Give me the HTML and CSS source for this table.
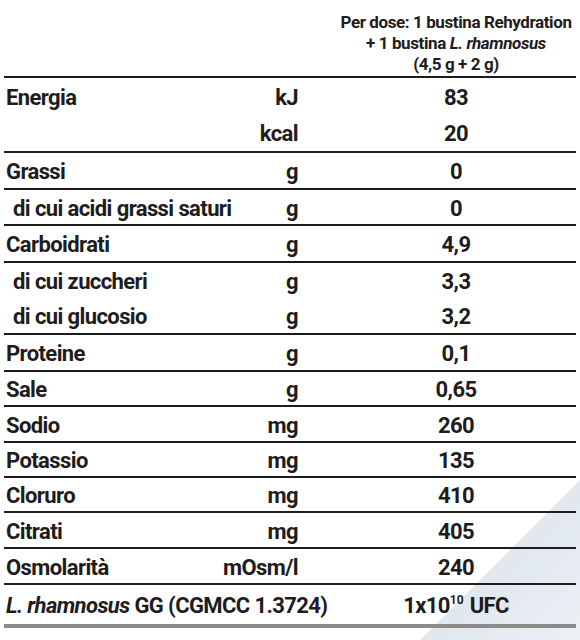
FILE: index.html
```html
<!DOCTYPE html>
<html lang="it">
<head>
<meta charset="utf-8">
<title>Valori nutrizionali</title>
<link rel="stylesheet" href="styles.css">
</head>
<body>
<div class="sheet">
  <div class="head">
    <div class="head-text">
      <span class="hl">Per dose: 1 bustina Rehydration</span>
      <span class="hl">+ 1 bustina <i>L. rhamnosus</i></span>
      <span class="hl">(4,5 g + 2 g)</span>
    </div>
  </div>

  <div class="row pair">
    <div class="label">Energia</div><div class="unit">kJ</div><div class="val">83</div>
    <div class="label"></div><div class="unit">kcal</div><div class="val">20</div>
  </div>
  <div class="row tall">
    <div class="label">Grassi</div><div class="unit">g</div><div class="val">0</div>
  </div>
  <div class="row">
    <div class="label sub">di cui acidi grassi saturi</div><div class="unit">g</div><div class="val">0</div>
  </div>
  <div class="row tall">
    <div class="label">Carboidrati</div><div class="unit">g</div><div class="val">4,9</div>
  </div>
  <div class="row double">
    <div class="label sub">di cui zuccheri</div><div class="unit">g</div><div class="val">3,3</div>
    <div class="label sub">di cui glucosio</div><div class="unit">g</div><div class="val">3,2</div>
  </div>
  <div class="row tall">
    <div class="label">Proteine</div><div class="unit">g</div><div class="val">0,1</div>
  </div>
  <div class="row short">
    <div class="label">Sale</div><div class="unit">g</div><div class="val">0,65</div>
  </div>
  <div class="row">
    <div class="label">Sodio</div><div class="unit">mg</div><div class="val">260</div>
  </div>
  <div class="row short">
    <div class="label">Potassio</div><div class="unit">mg</div><div class="val">135</div>
  </div>
  <div class="row short">
    <div class="label">Cloruro</div><div class="unit">mg</div><div class="val">410</div>
  </div>
  <div class="row">
    <div class="label">Citrati</div><div class="unit">mg</div><div class="val">405</div>
  </div>
  <div class="row">
    <div class="label">Osmolarità</div><div class="unit">mOsm/l</div><div class="val">240</div>
  </div>
  <div class="row last">
    <div class="label wide"><i>L. rhamnosus</i> GG (CGMCC 1.3724)</div><div class="val">1x10<sup>10</sup> UFC</div>
  </div>
</div>
</body>
</html>
```

FILE: styles.css
```css
html {
  height: 640px;
  background: linear-gradient(135deg, #ffffff 0%, #ffffff 86.8%, #e0e7ef 87%, #e5ebf1 93%, #edf1f5 100%);
}

body {
  margin: 0;
  font-family: "Roboto", "Liberation Sans", sans-serif;
  font-weight: 700;
  color: #1e1c1d;
}

.sheet {
  width: 572px;
  margin-left: 4px;
}

.head {
  display: grid;
  grid-template-columns: 332px 240px;
  height: 76px;
  border-bottom: 2px solid #1e1c1d;
}

.head-text {
  grid-column: 2;
  display: flex;
  flex-direction: column;
  align-items: center;
  padding-top: 12px;
  font-size: 17px;
  letter-spacing: -0.4px;
  line-height: 21px;
  white-space: nowrap;
}

.row {
  display: grid;
  grid-template-columns: 200px 132px 240px;
  grid-auto-rows: 34px;
  align-items: center;
  border-bottom: 2px solid #1e1c1d;
  font-size: 22px;
  letter-spacing: -0.6px;
  line-height: 1;
}

.row.tall { grid-auto-rows: 35px; }
.row.short { grid-auto-rows: 33px; }
.row.pair { grid-auto-rows: 36.5px; }
.row.double { grid-auto-rows: 35px; }
.row.last {
  grid-auto-rows: 39px;
  border-bottom: 4px solid #8b8b8b;
}

.label {
  padding-left: 2px;
  padding-top: 3px;
  white-space: nowrap;
}

.label.sub { padding-left: 9px; }
.label.wide { grid-column: 1 / 3; }

.unit {
  text-align: right;
  padding-right: 38px;
  padding-top: 3px;
  white-space: nowrap;
}

.val {
  display: flex;
  justify-content: center;
  padding-top: 3px;
  white-space: nowrap;
}

sup {
  font-size: 12px;
  line-height: 1;
  letter-spacing: 0;
  position: relative;
  top: -1px;
  margin-right: 6px;
}
```
